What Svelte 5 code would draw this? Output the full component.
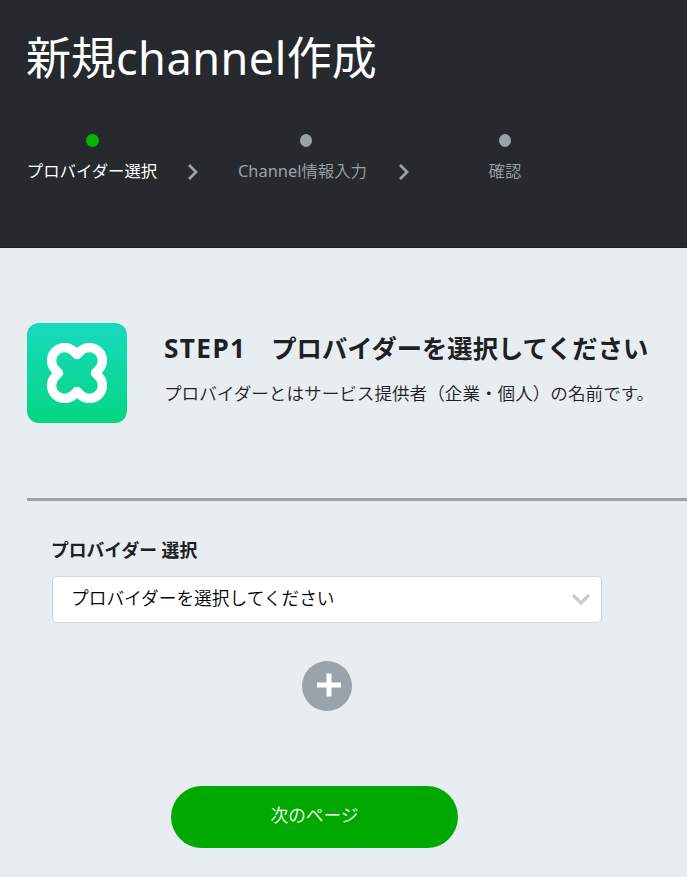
<script>
  const steps = [
    { label: 'プロバイダー選択', active: true },
    { latin: 'Channel', label: '情報入力', active: false },
    { label: '確認', active: false }
  ];
</script>

<div class="page">
  <header>
    <h1>新規<span class="latin">channel</span>作成</h1>
    <ol class="steps">
      {#each steps as step, i}
        {#if i > 0}
          <li class="sep" aria-hidden="true">
            <svg width="12" height="18" viewBox="0 0 12 18"><path d="M2 2l7 7-7 7" fill="none" stroke="#9aa3aa" stroke-width="2.8" /></svg>
          </li>
        {/if}
        <li class="step step{i + 1}" class:active={step.active}>
          <span class="dot"></span>
          <span class="name">{#if step.latin}<span class="en">{step.latin}</span>{/if}{step.label}</span>
        </li>
      {/each}
    </ol>
  </header>

  <main>
    <section class="intro">
      <svg class="logo" width="100" height="100" viewBox="0 0 100 100">
        <defs>
          <linearGradient id="tile" x1="0" y1="0" x2="0" y2="1">
            <stop offset="0" stop-color="#16dabd" />
            <stop offset="0.15" stop-color="#15d9b6" />
            <stop offset="1" stop-color="#05d681" />
          </linearGradient>
        </defs>
        <rect width="100" height="100" rx="12" fill="url(#tile)" />
        <path
          d="M50 31.6 L46.8 28.4 A13 13 0 0 0 28.4 46.8 L31.6 50 L28.4 53.2 A13 13 0 0 0 46.8 71.6 L50 68.4 L53.2 71.6 A13 13 0 0 0 71.6 53.2 L68.4 50 L71.6 46.8 A13 13 0 0 0 53.2 28.4 Z"
          fill="none" stroke="#fff" stroke-width="9.3" stroke-linejoin="round" />
      </svg>
      <div class="copy">
        <h2><span class="stepno">STEP1</span>　プロバイダーを選択してください</h2>
        <p>プロバイダーとはサービス提供者（企業・個人）の名前です。</p>
      </div>
    </section>

    <form onsubmit={(e) => e.preventDefault()}>
      <div class="label">プロバイダー 選択</div>
      <button type="button" class="select">
        <span>プロバイダーを選択してください</span>
        <svg width="20" height="14" viewBox="0 0 20 14"><path d="M2 3l8 8 8-8" fill="none" stroke="#c6cdd2" stroke-width="3.2" /></svg>
      </button>
      <button type="button" class="add" aria-label="追加">
        <svg width="26" height="26" viewBox="0 0 26 26"><path d="M13 1.5v23M1 13h24" stroke="#fff" stroke-width="5" /></svg>
      </button>
      <button type="submit" class="next">次のページ</button>
    </form>
  </main>
</div>

<style>
  :global(body) { margin: 0; }
  .page {
    width: 687px;
    height: 877px;
    overflow: hidden;
    background: #e8edf1;
    color: #1e2023;
    font-family: "Noto Sans", "Noto Sans CJK JP", sans-serif;
  }
  header {
    box-sizing: border-box;
    height: 248px;
    padding: 28px 0 0 26px;
    background: #26292e;
    border-bottom: 1px solid #1e2125;
  }
  h1 {
    margin: 0;
    height: 60px;
    line-height: 60px;
    font-size: 45px;
    font-weight: 400;
    color: #fff;
    white-space: nowrap;
  }
  .latin { letter-spacing: 0.5px; }
  .steps {
    display: flex;
    margin: 46px 0 0;
    padding: 0;
    list-style: none;
  }
  .step {
    display: flex;
    flex-direction: column;
    align-items: center;
    font-size: 16.4px;
    font-weight: 350;
    color: #9aa3aa;
    white-space: nowrap;
  }
  .step.active { color: #fff; font-weight: 400; }
  .en { font-weight: 400; letter-spacing: 0; }
  .step1 { width: 132px; }
  .step2 { width: 129px; }
  .step2 .dot { position: relative; left: 2px; }
  .step2 .name { margin-left: -2px; }
  .step3 { width: 34px; }
  .sep { width: 81px; box-sizing: border-box; padding: 29px 0 0 29px; }
  .sep svg { display: block; }
  .sep:nth-of-type(4) { width: 120px; padding-left: 30px; }
  .dot {
    width: 12px;
    height: 13px;
    border-radius: 50%;
    background: #9aa3aa;
  }
  .active .dot { width: 13px; background: #00b900; }
  .name { height: 24px; margin-top: 12px; line-height: 24px; }
  main { padding: 75px 0 0 27px; }
  .intro {
    display: flex;
    height: 175px;
    border-bottom: 3px solid #9aa3aa;
  }
  .logo { flex: none; }
  .copy { margin-left: 37px; white-space: nowrap; }
  h2 {
    margin: 8px 0 0;
    height: 34px;
    line-height: 34px;
    font-size: 25.3px;
    font-weight: 700;
  }
  .stepno {
    display: inline-block;
    width: 82px;
    font-size: 26.2px;
    letter-spacing: 1.4px;
  }
  p {
    margin: 15px 0 0;
    height: 26px;
    line-height: 26px;
    font-size: 17.6px;
    font-weight: 350;
  }
  form {
    display: flex;
    flex-direction: column;
    align-items: flex-start;
    padding: 36px 0 0 25px;
  }
  .label {
    height: 26px;
    line-height: 26px;
    margin-left: -1px;
    font-size: 17.8px;
    font-weight: 700;
  }
  button { font-family: inherit; border: 0; margin: 0; padding: 0; }
  .select {
    box-sizing: border-box;
    display: flex;
    align-items: center;
    justify-content: space-between;
    width: 550px;
    height: 47px;
    margin-top: 13px;
    padding: 0 10px 6px 18px;
    border: 1px solid #d1d6de;
    border-radius: 5px;
    background: #fff;
    color: #000;
    font-size: 17.7px;
    font-weight: 350;
  }
  .select svg { position: relative; top: 2px; }
  .add {
    display: flex;
    align-items: center;
    justify-content: center;
    width: 50px;
    height: 50px;
    margin: 38px 0 0 250px;
    padding: 0 0 3px 3px;
    border-radius: 50%;
    background: #9aa3aa;
  }
  .next {
    width: 287px;
    height: 62px;
    margin: 75px 0 0 119px;
    padding-bottom: 6px;
    border-radius: 31px;
    background: #00a900;
    color: #fff;
    font-size: 17.7px;
    font-weight: 350;
  }
</style>
